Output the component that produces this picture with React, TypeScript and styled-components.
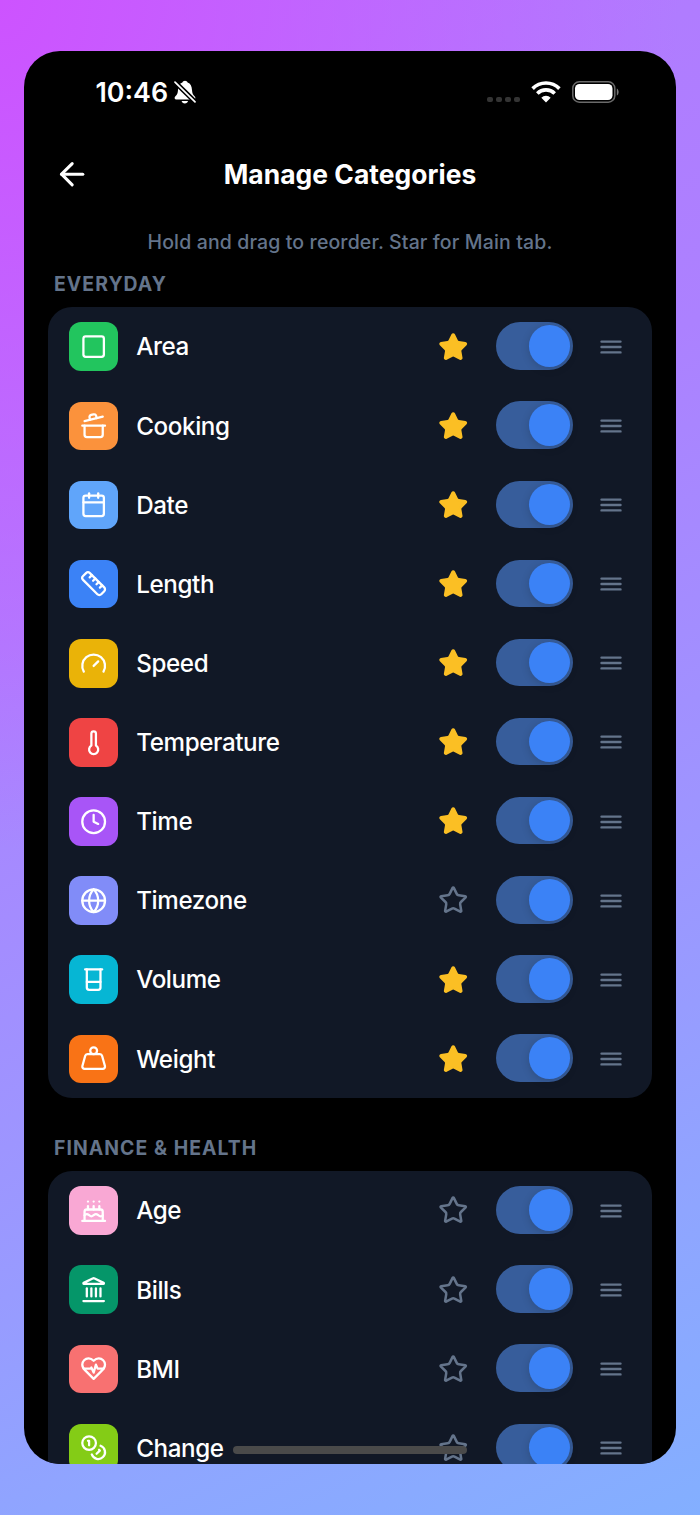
import React from "react";
import styled, { createGlobalStyle } from "styled-components";
import {
  ArrowLeft, Square, CookingPot, Calendar, Thermometer, Globe,
  Beaker, Cake, Landmark, LucideIcon,
} from "lucide-react";

const GlobalStyle = createGlobalStyle`
  * { box-sizing: border-box; }
  body { margin: 0; font-family: Inter, "Liberation Sans", sans-serif; }
`;

const Page = styled.div`
  width: 700px;
  height: 1515px;
  padding: 51px 24px;
  overflow: hidden;
  background:
    radial-gradient(ellipse 680px 850px at 0 0, #cd53ff 0%, rgba(205, 83, 255, 0) 100%),
    linear-gradient(155deg, #b576ff 0%, #b07cff 18%, #ac81ff 35%, #9e94ff 61%, #979cff 72%, #8fa5ff 83%, #83afff 100%);
`;

const Screen = styled.main`
  position: relative;
  height: 1413px;
  padding: 0 24px;
  overflow: hidden;
  border-radius: 36px;
  background: #000;
  color: #fff;
`;

const StatusBar = styled.div`
  display: flex;
  justify-content: space-between;
  align-items: center;
  height: 82px;
  padding: 0 32px 0 47.5px;
`;

const StatusGroup = styled.div`
  display: flex;
  align-items: center;
`;

const Clock = styled.span`
  font-size: 26.8px;
  font-weight: 600;
  line-height: 32px;
  letter-spacing: 0;
  margin: 0 6px 0 0;
`;

const SignalDots = styled.div`
  display: flex;
  gap: 3.2px;
  margin: 15px 11px 0 0;
`;

const Dot = styled.i`
  width: 5.9px;
  height: 5.9px;
  border-radius: 2px;
  background: #343434;
`;

const Header = styled.header`
  display: grid;
  grid-template-columns: 48px 1fr 48px;
  align-items: center;
  height: 82px;
`;

const BackButton = styled.button`
  display: flex;
  justify-content: center;
  padding: 0;
  border: 0;
  background: none;
  color: #fff;
`;

const Title = styled.h1`
  margin: 0;
  text-align: center;
  font-size: 26.4px;
  font-weight: 700;
  letter-spacing: 0.05px;
`;

const Hint = styled.p`
  margin: 15px 0 0;
  height: 24px;
  text-align: center;
  font-size: 19.5px;
  line-height: 24px;
  letter-spacing: 0.13px;
  font-weight: 450;
  color: #64748b;
`;

const SectionTitle = styled.h2<{ $gap: number }>`
  margin: ${(p) => p.$gap}px 0 0 6px;
  height: 24px;
  font-size: 19.4px;
  font-weight: 700;
  line-height: 24px;
  letter-spacing: 1.05px;
  color: #64748b;
`;

const Card = styled.section`
  margin-top: 11.5px;
  width: 604px;
  border-radius: 24px;
  background: #111826;
`;

const Row = styled.div`
  display: flex;
  align-items: center;
  height: 79.13px;
  padding: 0 30px 0 21px;
`;

const Tile = styled.div<{ $color: string }>`
  display: flex;
  align-items: center;
  justify-content: center;
  width: 48.7px;
  height: 48.7px;
  border-radius: 12px;
  background: ${(p) => p.$color};
`;

const Label = styled.span`
  flex: 1;
  margin: 1.4px 0 0 18.5px;
  font-size: 24.2px;
  line-height: 32px;
  font-weight: 500;
  letter-spacing: -0.38px;
`;

const Track = styled.div`
  display: flex;
  justify-content: flex-end;
  width: 77.6px;
  height: 47.4px;
  margin: 0 26.7px 1.6px 26.9px;
  padding: 3px;
  border-radius: 24px;
  background: #375d9b;
`;

const Thumb = styled.i`
  width: 41.4px;
  height: 41.4px;
  border-radius: 50%;
  background: #3b82f6;
  box-shadow: 0 2px 8px rgba(0, 0, 0, 0.16);
`;

const HomeIndicator = styled.div`
  position: absolute;
  left: 209px;
  bottom: 10px;
  width: 234px;
  height: 8px;
  border-radius: 4px;
  background: #4a4a4a;
`;

type Glyph = LucideIcon | ((p: { size?: number; strokeWidth?: number }) => React.ReactElement);

const stroked = (children: React.ReactNode) =>
  function StrokedIcon({ size = 24, strokeWidth = 2 }: { size?: number; strokeWidth?: number }) {
    return (
      <svg width={size} height={size} viewBox="0 0 24 24" fill="none" stroke="currentColor"
        strokeWidth={strokeWidth} strokeLinecap="round" strokeLinejoin="round">
        {children}
      </svg>
    );
  };

const RulerIcon = stroked(<>
  <path d="M21.3 15.3a2.4 2.4 0 0 1 0 3.4l-2.6 2.6a2.4 2.4 0 0 1-3.4 0L2.7 8.7a2.41 2.41 0 0 1 0-3.4l2.6-2.6a2.41 2.41 0 0 1 3.4 0Z" />
  <path d="m14.5 12.5 2-2M11.5 9.5l2-2M8.5 6.5l2-2M17.5 15.5l2-2" />
</>);
const GaugeIcon = stroked(<path d="m12 14 4-4M3.34 19a10 10 0 1 1 17.32 0" />);
const ClockIcon = stroked(<><circle cx="12" cy="12" r="10" /><path d="M12 6v6l4 2" /></>);
const WeightIcon = stroked(<>
  <circle cx="12" cy="5" r="3" />
  <path d="M6.5 8a2 2 0 0 0-1.905 1.46L2.1 18.5A2 2 0 0 0 4 21h16a2 2 0 0 0 1.925-2.54L19.4 9.5A2 2 0 0 0 17.48 8Z" />
</>);
const HeartIcon = stroked(<>
  <path d="M19 14c1.49-1.46 3-3.21 3-5.5A5.5 5.5 0 0 0 16.5 3c-1.76 0-3 .5-4.5 2-1.5-1.5-2.74-2-4.5-2A5.5 5.5 0 0 0 2 8.5c0 2.3 1.5 4.05 3 5.5l7 7Z" />
  <path d="M3.22 12H9.5l.5-1 2 4.5 2-7 1.5 3.5h5.27" />
</>);
const CoinsIcon = stroked(<>
  <circle cx="8" cy="8" r="6" />
  <path d="M18.09 10.37A6 6 0 1 1 10.34 18M7 6h1v4M16.71 13.88l.7.71-2.82 2.82" />
</>);

const STAR = "M11.525 2.295a.53.53 0 0 1 .95 0l2.31 4.679a2.123 2.123 0 0 0 1.595 1.16l5.166.756a.53.53 0 0 1 .294.904l-3.736 3.638a2.123 2.123 0 0 0-.611 1.878l.882 5.14a.53.53 0 0 1-.771.56l-4.618-2.428a2.122 2.122 0 0 0-1.973 0L6.396 21.01a.53.53 0 0 1-.77-.56l.881-5.139a2.122 2.122 0 0 0-.611-1.879L2.16 9.795a.53.53 0 0 1 .294-.906l5.165-.755a2.122 2.122 0 0 0 1.597-1.16z";

const StarIcon = ({ on }: { on: boolean }) => (
  <svg width="30.4" height="30.4" viewBox="0 0 24 24" fill={on ? "#fbbf24" : "none"}
    stroke={on ? "#fbbf24" : "#64748b"} strokeWidth="2" strokeLinejoin="round">
    <path d={STAR} />
  </svg>
);

const Handle = () => (
  <svg width="22" height="16" viewBox="0 0 22 16" stroke="#64748b" strokeWidth="2.4" strokeLinecap="round">
    <path d="M1.5 2.600h19M1.500 8h19M1.500 13.400h19" />
  </svg>
);

const MutedBell = () => (
  <svg width="22" height="24" viewBox="0 0 22 24" fill="none">
    <path d="M11 .7c-1.300 0-2.200.7-2.600 1.800C5.300 3.600 4.200 6.200 4 10c-.2 3.600-1 4.700-2.800 6.600-1.200 1.300-.5 2.900 1 2.900h17.600c1.500 0 2.200-1.600 1-2.900C19 14.700 18.200 13.600 18 10c-.2-3.800-1.300-6.400-4.400-7.500C13.200 1.400 12.300.7 11 .7Z" fill="#fff" />
    <path d="M7.600 21h6.400c-.3 1.500-1.500 2.500-3.200 2.500S7.900 22.500 7.600 21Z" fill="#fff" />
    <path d="m0 1.100 22 21.600" stroke="#000" strokeWidth="4.800" />
    <path d="m1 2.100 20 19.700" stroke="#fff" strokeWidth="1.700" strokeLinecap="round" />
  </svg>
);

const Wifi = () => (
  <svg width="30" height="22" viewBox="0 0 30 22" fill="none" stroke="#fff" strokeWidth="3.600">
    <path d="M1.600 7.600a19 19 0 0 1 26.800 0" />
    <path d="M6.300 12.500a12.300 12.300 0 0 1 17.400 0" />
    <path d="m10.300 16.700 4.700 4.700 4.700-4.700a6.700 6.700 0 0 0-9.400 0Z" fill="#fff" stroke="none" />
  </svg>
);

const BatteryIcon = styled.svg`
  margin-left: 11px;
`;

const Battery = () => (
  <BatteryIcon width="48" height="22" viewBox="0 0 48 22">
    <rect x=".8" y=".8" width="42" height="20.400" rx="6.500" fill="none" stroke="#6a6a6a" strokeWidth="1.500" />
    <rect x="3" y="3" width="37.500" height="16" rx="4.500" fill="#fff" />
    <path d="M44.800 7.500c2.400 1 2.400 6 0 7Z" fill="#777" />
  </BatteryIcon>
);

interface Category {
  name: string;
  color: string;
  icon: Glyph;
  starred: boolean;
}

const everyday: Category[] = [
  { name: "Area", color: "#22c55e", icon: Square, starred: true },
  { name: "Cooking", color: "#fb923c", icon: CookingPot, starred: true },
  { name: "Date", color: "#60a5fa", icon: Calendar, starred: true },
  { name: "Length", color: "#3b82f6", icon: RulerIcon, starred: true },
  { name: "Speed", color: "#eab308", icon: GaugeIcon, starred: true },
  { name: "Temperature", color: "#ef4444", icon: Thermometer, starred: true },
  { name: "Time", color: "#a855f7", icon: ClockIcon, starred: true },
  { name: "Timezone", color: "#818cf8", icon: Globe, starred: false },
  { name: "Volume", color: "#06b6d4", icon: Beaker, starred: true },
  { name: "Weight", color: "#f97316", icon: WeightIcon, starred: true },
];

const finance: Category[] = [
  { name: "Age", color: "#f9a8d4", icon: Cake, starred: false },
  { name: "Bills", color: "#059669", icon: Landmark, starred: false },
  { name: "BMI", color: "#f87171", icon: HeartIcon, starred: false },
  { name: "Change", color: "#84cc16", icon: CoinsIcon, starred: false },
];

const CategoryList = ({ items }: { items: Category[] }) => (
  <Card>
    {items.map(({ name, color, icon: Icon, starred }) => (
      <Row key={name}>
        <Tile $color={color}><Icon size={27.3} strokeWidth={2} /></Tile>
        <Label>{name}</Label>
        <StarIcon on={starred} />
        <Track><Thumb /></Track>
        <Handle />
      </Row>
    ))}
  </Card>
);

export default function App() {
  return (
    <>
      <GlobalStyle />
      <Page>
        <Screen>
          <StatusBar>
            <StatusGroup><Clock>10:46</Clock><MutedBell /></StatusGroup>
            <StatusGroup>
              <SignalDots><Dot /><Dot /><Dot /><Dot /></SignalDots>
              <Wifi />
              <Battery />
            </StatusGroup>
          </StatusBar>
          <Header>
            <BackButton aria-label="Back"><ArrowLeft size={36.4} strokeWidth={2} /></BackButton>
            <Title>Manage Categories</Title>
          </Header>
          <Hint>Hold and drag to reorder. Star for Main tab.</Hint>
          <SectionTitle $gap={17.7}>EVERYDAY</SectionTitle>
          <CategoryList items={everyday} />
          <SectionTitle $gap={37.2}>{"FINANCE & HEALTH"}</SectionTitle>
          <CategoryList items={finance} />
          <HomeIndicator />
        </Screen>
      </Page>
    </>
  );
}
